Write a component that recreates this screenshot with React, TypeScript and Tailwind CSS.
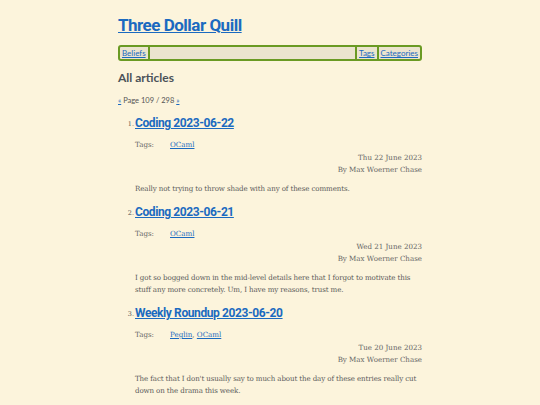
import React from "react";

const sans = "font-['Lato',sans-serif]";
const head = "font-['Roboto',sans-serif]";
const serif = "font-['DejaVu_Serif',serif]";

type Article = {
	n: number;
	title: string;
	tags: string[];
	date: string;
	excerpt: string;
};

const articles: Article[] = [
	{
		n: 1,
		title: "Coding 2023-06-22",
		tags: ["OCaml"],
		date: "Thu 22 June 2023",
		excerpt: "Really not trying to throw shade with any of these comments.",
	},
	{
		n: 2,
		title: "Coding 2023-06-21",
		tags: ["OCaml"],
		date: "Wed 21 June 2023",
		excerpt:
			"I got so bogged down in the mid-level details here that I forgot to motivate this stuff any more concretely. Um, I have my reasons, trust me.",
	},
	{
		n: 3,
		title: "Weekly Roundup 2023-06-20",
		tags: ["Peglin", "OCaml"],
		date: "Tue 20 June 2023",
		excerpt:
			"The fact that I don't usually say to much about the day of these entries really cut down on the drama this week.",
	},
];

const ArticleItem: React.FC<{ a: Article }> = ({ a }) => (
	<li className="flex">
		<span className={`${serif} text-[6.5px] text-[#555] w-[17px] text-right pr-[1px] pt-[7px]`}>{a.n}.</span>
		<div className="flex-1">
			<h3 className={`${head} text-[12px] font-bold leading-[20px] tracking-[-0.4px]`}>
				<a href="#" className="text-[#1b6ac0] underline">{a.title}</a>
			</h3>
			<div className={`${serif} text-[7.1px] text-[#666] leading-[12px] mt-[6px]`}>
				<div className="flex">
					<span className="w-[35px]">Tags:</span>
					<span>
						{a.tags.map((t, i) => (
							<span key={t}>
								<a href="#" className="text-[#1b6ac0] underline">{t}</a>
								{i < a.tags.length - 1 ? ", " : ""}
							</span>
						))}
					</span>
				</div>
				<div className="text-right mt-[1px]">{a.date}</div>
				<div className="text-right">By Max Woerner Chase</div>
			</div>
			<p className={`${serif} text-[7.1px] text-[#5a5a5a] leading-[12px] tracking-[-0.12px] mt-[7px] mb-[7px]`}>{a.excerpt}</p>
		</div>
	</li>
);

export default function App() {
	return (
		<div className="min-h-screen bg-[#fcf4dc]">
			<div className="w-[304px] mx-auto pt-[13px]">
				<h1 className={`${head} text-[17px] font-bold leading-[24px] tracking-[-0.5px]`}>
					<a href="#" className="text-[#1b6ac0] underline">Three Dollar Quill</a>
				</h1>
				<nav className={`${sans} mt-[8px] h-[16px] border-2 border-[#6a9a23] rounded-[3px] bg-[#ebe4ce] flex items-stretch text-[8px] leading-[12px]`}>
					<a href="#" className="text-[#1b6ac0] underline px-[2px] border-r-2 border-[#6a9a23]">Beliefs</a>
					<div className="flex-1"></div>
					<a href="#" className="text-[#1b6ac0] underline px-[2px] border-l-2 border-r-2 border-[#6a9a23]">Tags</a>
					<a href="#" className="text-[#1b6ac0] underline px-[2px]">Categories</a>
				</nav>
				<h2 className={`${sans} text-[12px] font-bold text-[#4b5258] mt-[8px] leading-[18px]`}>All articles</h2>
				<div className={`${sans} text-[7.5px] text-[#555] mt-[9px] leading-[10px]`}>
					<a href="#" className="text-[#1b6ac0] underline">«</a> Page 109 / 298{" "}
					<a href="#" className="text-[#1b6ac0] underline">»</a>
				</div>
				<ol className="mt-[7px]">
					{articles.map((a) => (
						<ArticleItem key={a.n} a={a} />
					))}
				</ol>
			</div>
		</div>
	);
}
